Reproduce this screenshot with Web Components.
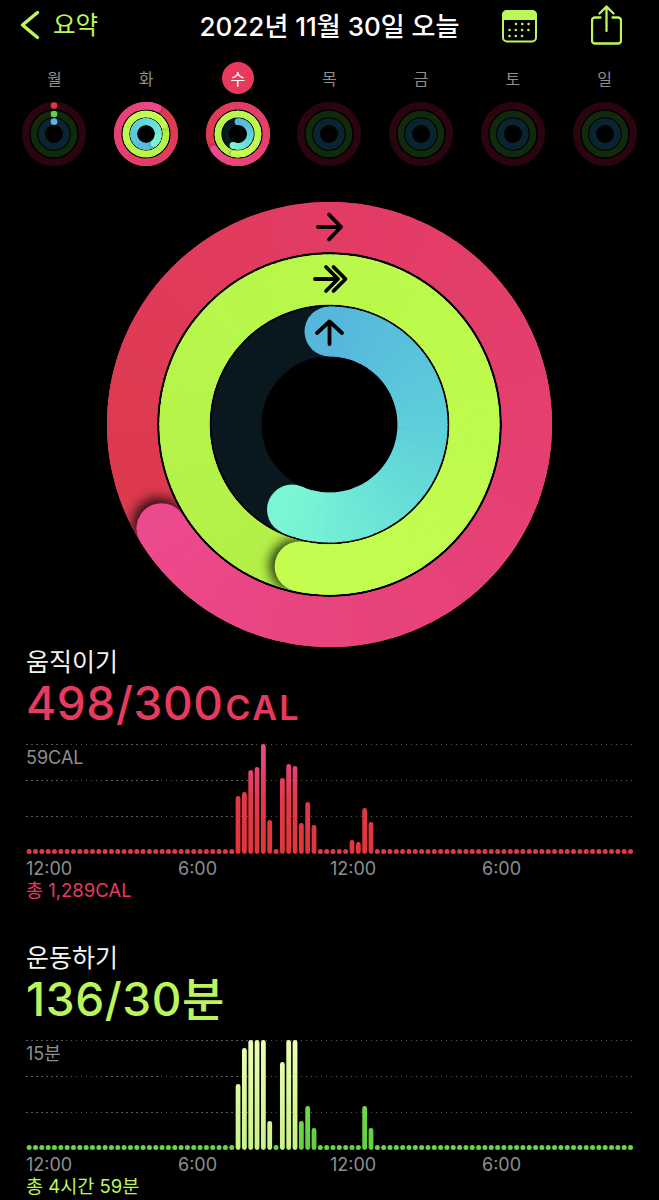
<!DOCTYPE html>
<html lang="ko">
<head>
<meta charset="utf-8">
<title>활동</title>
<style>
  html, body { margin: 0; background: #000; }
  body {
    height: 1200px;
    overflow: hidden;
    color: #fff;
    font-family: Inter, "Noto Sans CJK KR", sans-serif;
  }
</style>
</head>
<body>
  <nav-bar back="요약">2022년 11월 30일 오늘</nav-bar>

  <week-strip>
    <week-day label="월" move="0" exercise="0" stand="0"></week-day>
    <week-day label="화" move="107" exercise="118" stand="139"></week-day>
    <week-day label="수" today move="166.2" exercise="453.3" stand="56.6"></week-day>
    <week-day label="목"></week-day>
    <week-day label="금"></week-day>
    <week-day label="토"></week-day>
    <week-day label="일"></week-day>
  </week-strip>

  <hero-rings></hero-rings>

  <activity-metric tone="move">
    <span slot="label">움직이기</span>
    <span slot="value">498/300</span>
    <span slot="unit">CAL</span>
    <activity-chart tone="move" bars="33:58,34:62,35:84,36:87,37:110,38:34,40:76,41:90,42:88,43:31,44:52,45:29,51:14,52:12,53:46,54:32">59CAL</activity-chart>
    <span slot="total">총 1,289CAL</span>
  </activity-metric>

  <activity-metric tone="exercise">
    <span slot="label">운동하기</span>
    <span slot="value">136/30분</span>
    <activity-chart tone="exercise" pale="33,34,35,36,37,38,40,41,42" bars="33:66,34:102,35:110,36:110,37:110,38:29,40:88,41:110,42:110,43:29,44:44,45:22,53:44,54:22">15분</activity-chart>
    <span slot="total">총 4시간 59분</span>
  </activity-metric>

<script>
// ring colours run from the tail (f=0) to the head (f=1) of the visible lap
// cr/cw: the small rings keep wider black gaps than the scaled big one
const RINGS = [
  { key: 'move', r: 197.5, w: 50, cr: 197.5, cw: 50, track: '#2a0510', dot: '#e0373f',
    stops: [[0, '#dc3a4a'], [.34, '#e23c64'], [.6, '#e53f70'], [.85, '#e8447f'], [1, '#ec4a8e']] },
  { key: 'exercise', r: 145, w: 50, cr: 139.5, cw: 45, track: '#112a0d', dot: '#66d04a',
    stops: [[0, '#b2ee47'], [.3, '#b8f64b'], [.5, '#baf94b'], [1, '#c4fd50']] },
  { key: 'stand', r: 93, w: 50, cr: 86, cw: 47, track: '#0a2530', dot: '#5cb5e0',
    stops: [[0, '#56b6dc'], [.45, '#5dcfda'], [.8, '#6ee8d6'], [1, '#7af6d4']] },
];
const C = 222.5;

function hex(c) {
  return [1, 3, 5].map(i => parseInt(c.slice(i, i + 2), 16));
}
function mix(stops, f) {
  let i = 0;
  while (i < stops.length - 2 && f > stops[i + 1][0]) i++;
  const [a, ca] = stops[i], [b, cb] = stops[i + 1];
  const t = Math.min(1, Math.max(0, (f - a) / (b - a)));
  const A = hex(ca), B = hex(cb);
  return `rgb(${A.map((v, k) => Math.round(v + (B[k] - v) * t)).join(',')})`;
}
function pt(r, deg) {
  const a = deg * Math.PI / 180;
  return [C + r * Math.sin(a), C - r * Math.cos(a)];
}
function arc(r, from, to) {
  const [x1, y1] = pt(r, from), [x2, y2] = pt(r, to);
  return `M${x1.toFixed(2)} ${y1.toFixed(2)}A${r} ${r} 0 0 1 ${x2.toFixed(2)} ${y2.toFixed(2)}`;
}
function segments(g, tail, head, from, to, step) {
  let out = '';
  for (let a = from; a < to; a += step) {
    const end = Math.min(to, a + step + step * .3);
    const f = (a + step / 2 - tail) / (head - tail);
    out += `<path d="${arc(g.r, a, end)}" stroke="${mix(g.stops, f)}" stroke-width="${g.w}" fill="none"/>`;
  }
  return out;
}
function drawRing(ring, value, small) {
  const g = small ? { ...ring, r: ring.cr, w: ring.cw } : ring;
  const step = small ? 15 : 2;
  const dim = `<circle cx="${C}" cy="${C}" r="${g.r}" fill="none" stroke="${ring.track}" stroke-width="${g.w}"/>`;
  if (value === null) return dim;
  const pct = parseFloat(value);
  if (pct === 0) {
    const [x, y] = pt(g.r, 0);
    return `${dim}<circle cx="${x}" cy="${y}" r="23" fill="${ring.dot}"/>`;
  }
  const head = pct * 3.6 % 360;
  const capR = g.w / 2;
  const [hx, hy] = pt(g.r, head);
  const headCap = `<circle cx="${hx}" cy="${hy}" r="${capR}" fill="${mix(g.stops, 1)}"/>`;
  if (pct < 100) {
    const track = `<circle cx="${C}" cy="${C}" r="${g.r}" fill="none" stroke="#08181e" stroke-width="${g.w}"/>`;
    const [sx, sy] = pt(g.r, 0);
    return `${track}<circle cx="${sx}" cy="${sy}" r="${capR}" fill="${mix(g.stops, 0)}"/>` +
      headCap + segments(g, 0, head, 0, head, step);
  }
  // lap over itself: shadow of the head falls on the start of the lap
  const tail = head - 360;
  const out = g.r + capR, inn = g.r - capR;
  const circlePath = r => `M${C - r} ${C}a${r} ${r} 0 1 0 ${2 * r} 0a${r} ${r} 0 1 0 ${-2 * r} 0z`;
  const [shx, shy] = pt(g.r, head + 1.5);
  return `<clipPath id="clip-${ring.key}"><path clip-rule="evenodd" d="${circlePath(out)}${circlePath(inn)}"/></clipPath>` +
    `<circle cx="${C}" cy="${C}" r="${g.r}" fill="none" stroke="${mix(g.stops, .5)}" stroke-width="${g.w}"/>` +
    segments(g, tail, head, tail, head, step) +
    `<g clip-path="url(#clip-${ring.key})"><circle cx="${shx}" cy="${shy}" r="${capR + 1}" fill="#000" opacity="${small ? .3 : .8}" filter="url(#soft)"/></g>` +
    headCap + segments(g, tail, head, head - 45, head, step);
}

class ActivityRing extends HTMLElement {
  connectedCallback() {
    const size = +this.getAttribute('size') || 64;
    const body = RINGS.map(ring => drawRing(ring, this.getAttribute(ring.key), size < 100)).join('');
    const marks = this.hasAttribute('arrows') ? `
      <g fill="none" stroke="#000" stroke-width="3.800" stroke-linecap="round" stroke-linejoin="round" transform="translate(-107 -202)">
        <path d="M318 227H341M329 214.500L341 227L329 239.500"/>
        <path d="M315 279H337M326 267L338 279L326 291M333.500 267L345.500 279L333.500 291"/>
        <path d="M329.500 344V321.500M317 333L329.500 321.500L342 333"/>
      </g>` : '';
    this.attachShadow({ mode: 'open' });
    this.shadowRoot.innerHTML = `
      <style>
        :host { display: block; width: ${size}px; height: ${size}px; }
        svg { display: block; width: 100%; height: 100%; }
      </style>
      <svg viewBox="0 0 445 445">
        <filter id="soft" x="-50%" y="-50%" width="200%" height="200%"><feGaussianBlur stdDeviation="6"/></filter>
        ${body}${marks}
      </svg>
    `;
  }
}
customElements.define('activity-ring', ActivityRing);

class NavBar extends HTMLElement {
  connectedCallback() {
    this.attachShadow({ mode: 'open' });
    this.shadowRoot.innerHTML = `
      <style>
        :host {
          display: grid;
          grid-template-columns: 1fr auto 1fr;
          height: 52px;
          color: #bdf65a;
        }
        .back { display: flex; align-items: center; gap: 13px; padding: 0 0 2px 20px; font-size: 24.500px; }
        .back span { margin-bottom: 3px; }
        .title { align-self: center; margin-bottom: 3px; color: #fff; font-size: 26px; font-weight: 500; white-space: nowrap; }
        .tools { display: flex; align-items: flex-start; justify-content: flex-end; gap: 54px; padding-right: 37px; }
        .cal { margin-top: 9.500px; }
        .share { margin-top: 4.500px; }
        svg { display: block; fill: none; stroke: #bdf65a; stroke-linecap: round; stroke-linejoin: round; }
      </style>
      <div class="back">
        <svg width="20" height="30" viewBox="0 0 20 30" stroke-width="3.500"><path d="M17.500 2.500L2.500 15L17.500 27.500"/></svg>
        <span>${this.getAttribute('back')}</span>
      </div>
      <div class="title"><slot></slot></div>
      <div class="tools">
        <svg class="cal" width="35" height="33" viewBox="0 0 35 33" stroke-width="2">
          <rect x="1" y="1" width="33" height="30.500" rx="4"/>
          <path d="M1 9V5a4 4 0 0 1 4-4h25a4 4 0 0 1 4 4v4z" fill="#bdf65a"/>
          <g stroke-width="2.600" stroke-dasharray="0 6.300">
            <path d="M14 14H27"/>
            <path d="M7.500 20H27"/>
            <path d="M7.500 26H21"/>
          </g>
        </svg>
        <svg class="share" width="31" height="40" viewBox="0 0 31 40" stroke-width="2.300">
          <path d="M9.500 12.500H4a3 3 0 0 0-3 3V35.500a3 3 0 0 0 3 3h23a3 3 0 0 0 3-3V15.500a3 3 0 0 0-3-3H21.500"/>
          <path d="M15.500 26V2M8.500 8.500L15.500 1.500L22.500 8.500"/>
        </svg>
      </div>
    `;
  }
}
customElements.define('nav-bar', NavBar);

class WeekStrip extends HTMLElement {
  connectedCallback() {
    this.attachShadow({ mode: 'open' });
    this.shadowRoot.innerHTML = `
      <style>
        :host {
          display: grid;
          grid-template-columns: repeat(7, 1fr);
          margin-top: 10px;
          padding: 0 8.500px;
        }
      </style>
      <slot></slot>
    `;
  }
}
customElements.define('week-strip', WeekStrip);

class WeekDay extends HTMLElement {
  connectedCallback() {
    const rings = RINGS.map(r => this.hasAttribute(r.key) ? `${r.key}="${this.getAttribute(r.key)}"` : '').join(' ');
    this.attachShadow({ mode: 'open' });
    this.shadowRoot.innerHTML = `
      <style>
        :host { display: flex; flex-direction: column; align-items: center; gap: 8px; }
        .label {
          width: 32px; height: 32px;
          display: flex; align-items: center; justify-content: center;
          border-radius: 50%;
          font-size: 16px;
          color: #8e8e8e;
        }
        :host([today]) .label { background: #e83a5c; color: #fff; }
      </style>
      <div class="label">${this.getAttribute('label')}</div>
      <activity-ring size="64" ${rings}></activity-ring>
    `;
  }
}
customElements.define('week-day', WeekDay);

class HeroRings extends HTMLElement {
  connectedCallback() {
    this.attachShadow({ mode: 'open' });
    this.shadowRoot.innerHTML = `
      <style>
        :host { display: flex; justify-content: center; margin-top: 36px; }
      </style>
      <activity-ring size="445" arrows move="166.2" exercise="453.3" stand="56.6"></activity-ring>
    `;
  }
}
customElements.define('hero-rings', HeroRings);

class ActivityMetric extends HTMLElement {
  connectedCallback() {
    const tone = this.getAttribute('tone') === 'move' ? '#e63b5e' : '#bcf55a';
    this.attachShadow({ mode: 'open' });
    this.shadowRoot.innerHTML = `
      <style>
        :host { display: block; padding-left: 26px; }
        :host(:last-of-type) { margin-top: 43px; }
        .label { font-size: 25px; line-height: 31px; color: #f2f2f2; }
        .value {
          display: flex; align-items: baseline;
          height: 45px; line-height: 50px;
          color: ${tone};
          font-size: 46px; font-weight: 500; letter-spacing: .6px;
        }
        .unit { font-size: 34px; font-weight: 600; letter-spacing: 2.400px; margin-left: 2px; }
        .chart { margin-top: 21px; }
        .total { font-size: 18.500px; line-height: 20px; margin-bottom: 2px; color: ${tone}; }
      </style>
      <div class="label"><slot name="label"></slot></div>
      <div class="value"><slot name="value"></slot><span class="unit"><slot name="unit"></slot></span></div>
      <div class="chart"><slot></slot></div>
      <div class="total"><slot name="total"></slot></div>
    `;
  }
}
customElements.define('activity-metric', ActivityMetric);

class ActivityChart extends HTMLElement {
  connectedCallback() {
    const move = this.getAttribute('tone') === 'move';
    const values = {};
    this.getAttribute('bars').split(',').forEach(p => {
      const [i, h] = p.split(':');
      values[i] = +h;
    });
    const pale = (this.getAttribute('pale') || '').split(',');
    const dot = move ? '#e03a40' : '#66d648';
    let marks = '';
    for (let i = 0; i < 96; i++) {
      const x = 3.17 + 6.33 * i;
      const h = values[i];
      if (!h) {
        marks += `<circle cx="${x}" cy="107.500" r="2.500" fill="${dot}"/>`;
        continue;
      }
      const fill = pale.includes(String(i)) ? 'url(#pale)' : 'url(#main)';
      marks += `<rect x="${x - 2.4}" y="${110 - h}" width="4.800" height="${h}" rx="2.400" fill="${fill}"/>`;
    }
    const stops = move
      ? '<stop offset="0" stop-color="#e03539"/><stop offset=".5" stop-color="#e03a48"/><stop offset="1" stop-color="#ea4a90"/>'
      : '<stop offset="0" stop-color="#62d03f"/><stop offset="1" stop-color="#84e652"/>';
    this.attachShadow({ mode: 'open' });
    this.shadowRoot.innerHTML = `
      <style>
        :host { display: block; width: 608px; }
        .plot { display: grid; height: 110px; }
        .plot > * { grid-area: 1 / 1; }
        .grid { display: flex; flex-direction: column; gap: 35px; }
        .line {
          height: 1px;
          background: repeating-linear-gradient(90deg, #585858 0 1.500px, transparent 1.500px 5px);
        }
        .scale { padding-top: 2px; font-size: 18px; line-height: 24px; color: #8e8e8e; }
        svg { display: block; width: 608px; height: 110px; }
        .axis {
          display: grid;
          grid-template-columns: repeat(4, 152px);
          margin-top: 4px;
          font-size: 18px; line-height: 22px;
          color: #8e8e8e;
        }
      </style>
      <div class="plot">
        <div class="grid"><div class="line"></div><div class="line"></div><div class="line"></div></div>
        <div class="scale"><slot></slot></div>
        <svg viewBox="0 0 608 110">
          <linearGradient id="main" gradientUnits="userSpaceOnUse" x1="0" y1="110" x2="0" y2="0">${stops}</linearGradient>
          <linearGradient id="pale" gradientUnits="userSpaceOnUse" x1="0" y1="110" x2="0" y2="0">
            <stop offset="0" stop-color="#c8f286"/><stop offset="1" stop-color="#edfdb8"/>
          </linearGradient>
          ${marks}
        </svg>
      </div>
      <div class="axis"><span>12:00</span><span>6:00</span><span>12:00</span><span>6:00</span></div>
    `;
  }
}
customElements.define('activity-chart', ActivityChart);
</script>
</body>
</html>
